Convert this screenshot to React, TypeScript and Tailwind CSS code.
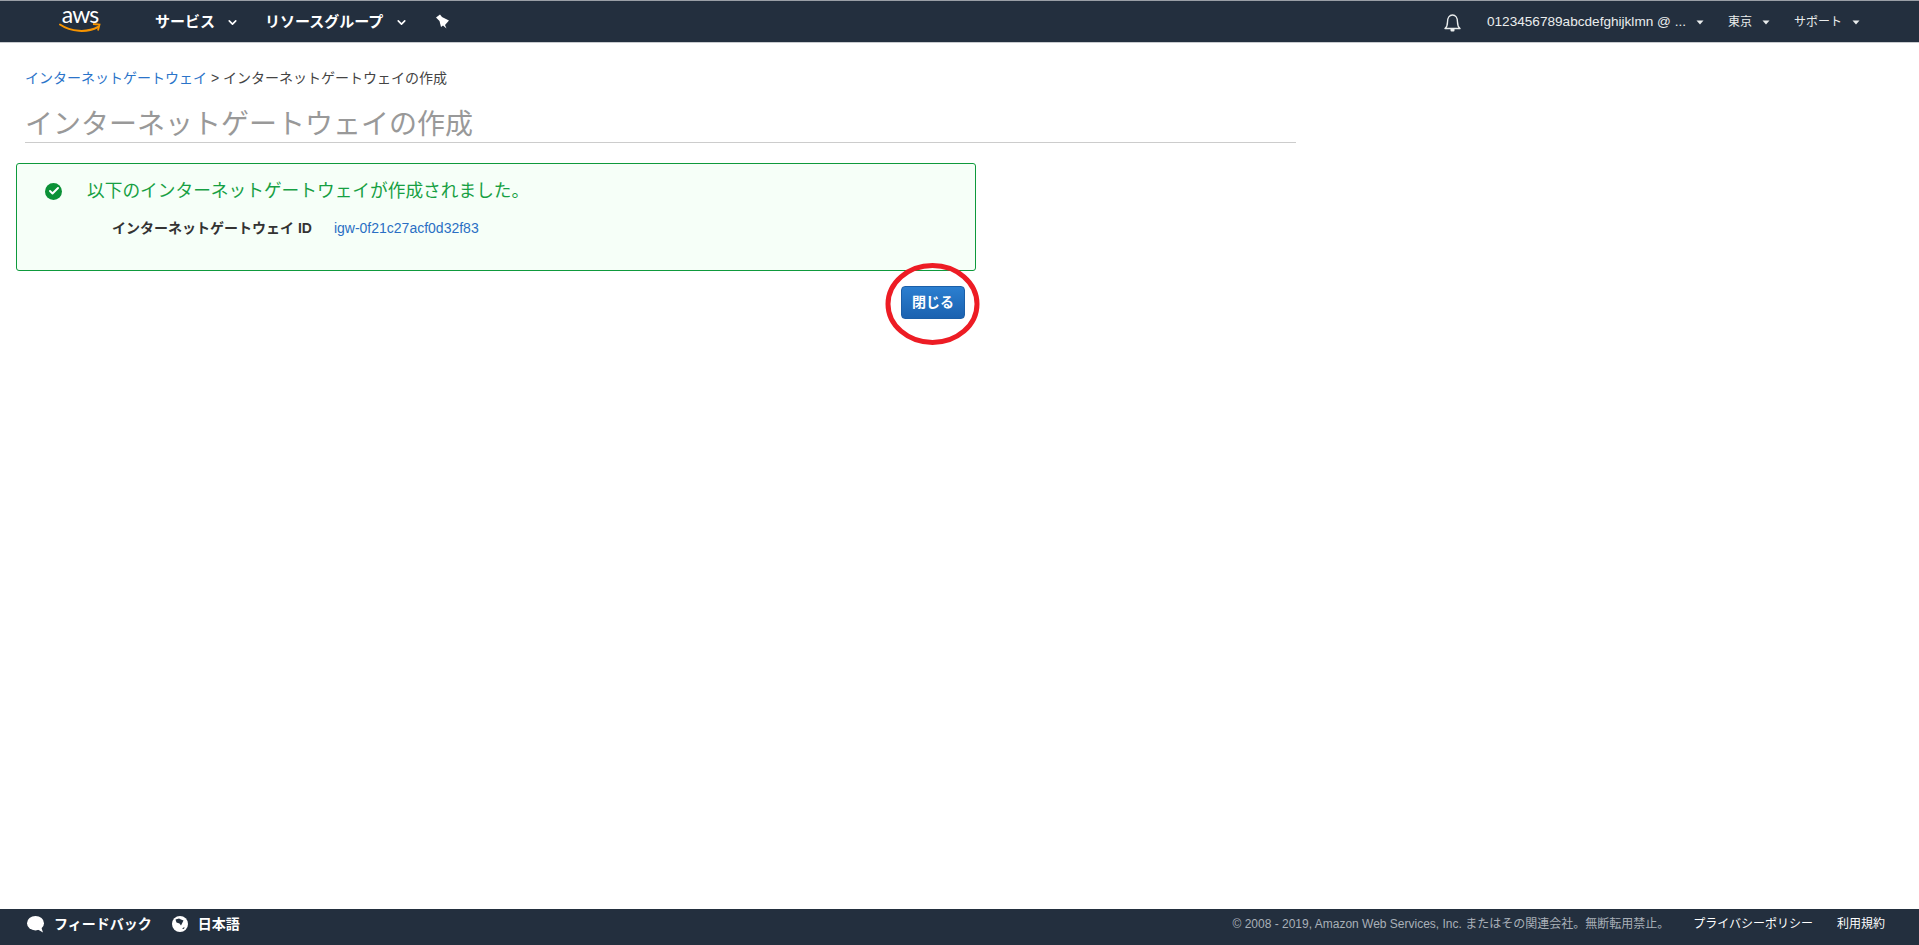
import { Check, ChevronDown } from 'lucide-react';

const font = "font-['Liberation_Sans','Noto_Sans_CJK_JP',sans-serif]";

function Caret() {
  return (
    <svg width="8" height="5" viewBox="0 0 8 5" className="ml-2.5 shrink-0">
      <path d="M0.5 0.5h7L4 4.5z" fill="#eaeded" />
    </svg>
  );
}

function AwsLogo() {
  return (
    <div className="flex w-[42px] flex-col items-center">
      <span className="font-['Lato',sans-serif] text-[23px] leading-[15px] tracking-[-1px] text-white">aws</span>
      <svg width="42" height="10" viewBox="0 0 42 10" className="mt-px">
        <path d="M1 1.500c11 7.500 27 8.500 38 2.500" fill="none" stroke="#f79400" strokeWidth="2" strokeLinecap="round" />
        <path d="M34 1l6.500 0.500-1.500 6" fill="none" stroke="#f79400" strokeWidth="1.800" />
      </svg>
    </div>
  );
}

function PinIcon() {
  return (
    <svg width="14" height="15" viewBox="0 0 14 15" className="ml-[28px]">
      <path d="M0 3.500 4 0.500 6 3 13 6.500 9 11 10.500 14.500 7 11.500 5 13 3.500 7z" fill="white" />
    </svg>
  );
}

function BellIcon() {
  return (
    <svg width="17" height="19" viewBox="0 0 17 19" className="mr-[26px]">
      <path
        d="M1 15.500c1.800-1.500 2.500-3 2.500-6.500 0-4 2-7 5-7s5 3 5 7c0 3.500 0.700 5 2.500 6.500z"
        fill="none"
        stroke="#eaeded"
        strokeWidth="1.400"
        strokeLinejoin="round"
      />
      <rect x="6.500" y="15.500" width="4" height="3" rx="1" fill="#eaeded" />
    </svg>
  );
}

function BubbleIcon() {
  return (
    <svg width="18" height="17" viewBox="0 0 18 17" className="ml-[27px]">
      <ellipse cx="8.500" cy="7.200" rx="8.500" ry="7.200" fill="white" />
      <path d="M10 13l6 3.500-2-6z" fill="white" />
    </svg>
  );
}

function GlobeIcon() {
  return (
    <svg width="16" height="16" viewBox="0 0 16 16" className="ml-[20px]">
      <circle cx="8" cy="8" r="8" fill="white" />
      <path d="M3.500 3.500 7 2.500 9 3.500 11.500 4.500 10.500 6.500 9 9.500 7.500 7.500 4.500 6.500z" fill="#232f3e" />
      <path d="M10 12.500 12.500 11 12 13z" fill="#232f3e" />
    </svg>
  );
}

function TopNav() {
  return (
    <header className="flex h-[43px] shrink-0 items-center border-t border-b border-t-[#9a9fa6] border-b-[#c8cbcf] bg-[#232f3e] text-white">
      <div className="ml-[59px] mt-[-3px]">
        <AwsLogo />
      </div>
      <div className="ml-[54px] flex items-center pt-0.5 text-[15px] font-bold">
        サービス
        <ChevronDown size={13} strokeWidth={3} className="ml-[11px]" />
      </div>
      <div className="ml-[26px] flex items-center pt-0.5 text-[15px] font-bold">
        リソースグループ
        <ChevronDown size={13} strokeWidth={3} className="ml-[12px]" />
      </div>
      <PinIcon />
      <div className="ml-auto flex items-center pr-[59px] pt-0.5 text-[12px] text-[#eaeded]">
        <BellIcon />
        <span className="text-[13.600px]">0123456789abcdefghijklmn @ ...</span>
        <Caret />
        <span className="ml-6">東京</span>
        <Caret />
        <span className="ml-6">サポート</span>
        <Caret />
      </div>
    </header>
  );
}

function SuccessAlert() {
  return (
    <div className="ml-4 h-[108px] w-[960px] rounded-[3px] border border-[#0e9a3c] bg-[#f6fff8] pl-[28px] pt-[14px]">
      <div className="flex items-center">
        <span className="flex h-[17px] w-[17px] items-center justify-center rounded-full bg-[#0b9137]">
          <Check size={12} strokeWidth={4} color="white" />
        </span>
        <span className="ml-[25px] text-[17.700px] leading-[26px] text-[#16a043]">
          以下のインターネットゲートウェイが作成されました。
        </span>
      </div>
      <div className="mt-[14px] flex items-center text-[14px] leading-[20px]">
        <span className="ml-[67px] font-bold text-[#333333]">インターネットゲートウェイ ID</span>
        <span className="ml-[22px] text-[#2a6fc4]">igw-0f21c27acf0d32f83</span>
      </div>
    </div>
  );
}

function Footer() {
  return (
    <footer className="flex h-[36px] shrink-0 items-center bg-[#232f3e] pb-[6px] pr-[34px] text-white">
      <BubbleIcon />
      <span className="ml-[9px] text-[14px] font-bold">フィードバック</span>
      <GlobeIcon />
      <span className="ml-[10px] text-[14px] font-bold">日本語</span>
      <span className="ml-auto text-[12px] text-[#a9b0b8]">
        © 2008 - 2019, Amazon Web Services, Inc. またはその関連会社。無断転用禁止。
      </span>
      <span className="ml-[24px] text-[12px]">プライバシーポリシー</span>
      <span className="ml-[24px] text-[12px]">利用規約</span>
    </footer>
  );
}

export default function App() {
  return (
    <div className={`flex h-[945px] flex-col overflow-hidden bg-white ${font}`}>
      <TopNav />
      <main className="flex-1 pt-[25px]">
        <div className="ml-[25px] text-[14px] leading-[20px] text-[#444444]">
          <span className="text-[#2b74c9]">インターネットゲートウェイ</span>
          <span> &gt; インターネットゲートウェイの作成</span>
        </div>
        <h1 className="ml-[25px] mt-[18px] w-[1271px] border-b border-[#cccccc] pt-px text-[28px] font-normal leading-[35px] text-[#999999]">
          インターネットゲートウェイの作成
        </h1>
        <div className="mt-[20px]">
          <SuccessAlert />
        </div>
        <div className="mt-[15px] flex w-[965px] justify-end">
          <div className="relative">
            <button className="h-[33px] w-[64px] rounded-[4px] border border-[#1b5fa8] bg-gradient-to-b from-[#2b7fd0] to-[#1b62b0] text-[14px] font-bold text-white">
              閉じる
            </button>
            <svg width="96" height="84" viewBox="0 0 96 84" className="absolute left-[-16px] top-[-24px]">
              <ellipse cx="47.500" cy="42" rx="44.500" ry="38.500" fill="none" stroke="#ed1c24" strokeWidth="5" />
            </svg>
          </div>
        </div>
      </main>
      <Footer />
    </div>
  );
}
